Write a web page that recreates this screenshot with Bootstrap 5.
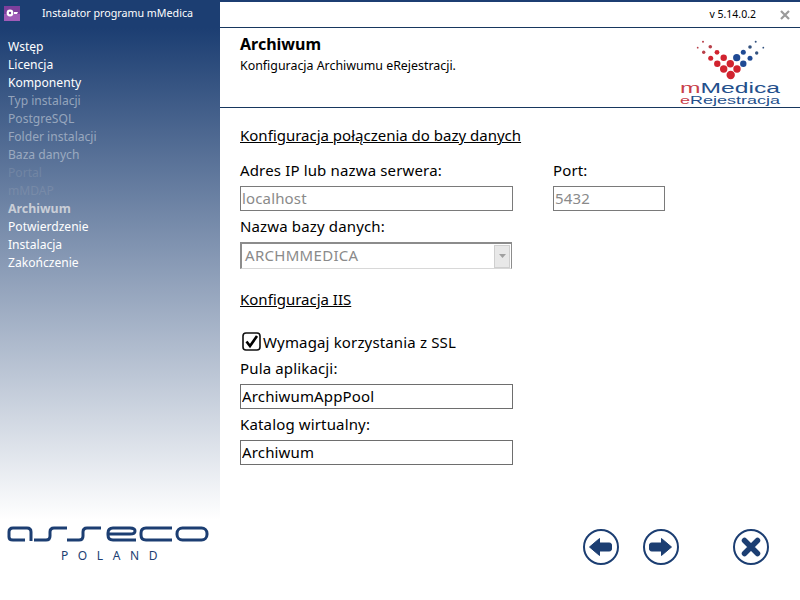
<!DOCTYPE html>
<html lang="pl">
<head>
<meta charset="utf-8">
<title>Instalator programu mMedica</title>
<link rel="stylesheet" href="https://cdn.jsdelivr.net/npm/bootstrap@5.3.0/dist/css/bootstrap.min.css">
<style>
html,body{height:100%;margin:0;background:#fff;}
body{font-family:"Noto Sans","Open Sans","Liberation Sans",sans-serif;color:#000;overflow:hidden;}
.shell{width:800px;height:600px;}
.side{width:220px;height:600px;flex:none;background:linear-gradient(180deg,#1c3e72 0,#1c3e72 28px,#ffffff 520px);color:#fff;}
.side-top{height:27px;padding-left:4px;font-size:10.7px;}
.side-title{margin-left:22px;line-height:27px;}
.steps{list-style:none;margin:11px 0 0;padding:0 0 0 8px;font-size:12.1px;line-height:18px;}
.steps .off{color:#b9c3d2;opacity:.7;}
.steps .ghost{color:#a8b0bd;opacity:.25;}
.steps .cur{color:#c9ced7;font-weight:700;font-size:12.4px;}
.brand{margin:auto 0 0;padding:0 0 37px 0;}
.brand-name{font-size:12px;letter-spacing:9.6px;color:#1c3e72;text-align:center;line-height:14px;margin-top:7px;padding-left:8px;}
.panel{width:580px;height:600px;flex:none;}
.topbar{height:28px;border-bottom:1px solid #17375e;border-top:2px solid #1c3e72;font-size:10.5px;padding-right:10px;gap:24px;}
.head{height:80px;border-bottom:1px solid #17375e;padding-left:20px;padding-right:15px;}
.head-title{font-size:16px;font-weight:700;line-height:18px;margin-top:7px;}
.head-sub{font-size:12.4px;line-height:16px;margin-top:5px;}
.form-zone{padding:16px 0 0 20px;font-size:15px;line-height:20px;letter-spacing:.15px;flex:1 1 auto;}
.sect{letter-spacing:0;text-decoration:underline;height:24px;line-height:22px;}
.lab{display:block;margin:0;height:20px;line-height:18px;}
.fld{display:block;width:273px;height:25px;border:1px solid #6e6e6e;padding:0 1px 2px;font:inherit;letter-spacing:inherit;line-height:20px;border-radius:0;outline:0;background:#fff;color:#000;margin-top:5px;}
.fld.dim{color:#8a8a8a;border-color:#7a7a7a;}
.fld.port{width:112px;}
.gap-port{width:40px;}
.top-13{margin-top:13px;}
.top-6{margin-top:6px;}
.top-19{margin-top:19px;}
.top-18{margin-top:18px;}
.top-5{margin-top:5px;}
.combo{width:272px;height:27px;border:1px solid #8c8c8c;border-bottom-color:#d8d8d8;border-top-width:2px;border-left-width:2px;color:#8a8a8a;padding:0 0 0 3px;line-height:24px;letter-spacing:.3px;margin-top:5px;}
.combo-text{margin-top:-2px;}
.combo-btn{width:16px;height:23px;background:#e8e8e8;border:1px solid #cfcfcf;margin-right:1px;}
.chk{height:24px;line-height:24px;}
.chk-box{margin-left:2px;margin-right:1px;}
.foot{padding:0 30px 34px 0;gap:22px;}
.rbtn{width:38px;height:38px;border:0;background:none;padding:0;}
.rbtn-far{margin-left:30px;}
</style>
</head>
<body>
<div class="shell d-flex">
  <aside class="side d-flex flex-column">
    <div class="side-top d-flex align-items-center">
      <svg width="16" height="15" viewBox="0 0 16 15"><rect width="16" height="15" fill="#7d3f9c"/><rect y="8" width="16" height="7" fill="#a05cb8"/><circle cx="6" cy="7" r="3.4" fill="#fff"/><circle cx="6" cy="7" r="1.2" fill="#7d3f9c"/><path d="M10 6h4l-1 2h-3z" fill="#fff"/></svg>
      <span class="side-title">Instalator programu mMedica</span>
    </div>
    <ul class="steps">
      <li>Wstęp</li><li>Licencja</li><li>Komponenty</li>
      <li class="off">Typ instalacji</li><li class="off">PostgreSQL</li><li class="off">Folder instalacji</li><li class="off">Baza danych</li>
      <li class="ghost">Portal</li><li class="ghost">mMDAP</li>
      <li class="cur">Archiwum</li>
      <li>Potwierdzenie</li><li>Instalacja</li><li>Zakończenie</li>
    </ul>
    <div class="brand">
      <svg class="d-block" width="220" height="17" viewBox="0 525 220 17" fill="none" stroke="#1c3e72" stroke-width="3">
        <path d="M31 541V532q0-4-4-4H13q-4 0-4 4v5q0 3 4 3H25"/>
        <path d="M34 540H46q4 0 4-4v-4q0-4 4-4H67"/>
        <path d="M67 540H79q4 0 4-4v-4q0-4 4-4H101"/>
        <path d="M136 540H113q-5 0-5-5v-2q0-5 5-5H130q5 0 5 3t-5 3H109"/>
        <path d="M172 528H146q-5 0-5 5v2q0 5 5 5H172"/>
        <rect x="177" y="528" width="30" height="12" rx="5.5"/>
      </svg>
      <div class="brand-name">POLAND</div>
    </div>
  </aside>
  <main class="panel d-flex flex-column">
    <div class="topbar d-flex align-items-center justify-content-end">
      <span>v 5.14.0.2</span>
      <svg width="10" height="10" viewBox="0 0 10 10" stroke="#9a9a9a" stroke-width="2.2"><path d="M1 1l8 8M9 1l-8 8"/></svg>
    </div>
    <header class="head d-flex justify-content-between">
      <div>
        <div class="head-title">Archiwum</div>
        <div class="head-sub">Konfiguracja Archiwumu eRejestracji.</div>
      </div>
      <svg width="110" height="79" viewBox="675 28 110 79">
        <g fill="#d1232f">
          <circle cx="730.7" cy="75" r="4.2"/><circle cx="723.7" cy="69" r="3.7"/><circle cx="737" cy="69" r="3.7"/><circle cx="717.3" cy="63.7" r="3.2"/><circle cx="730.3" cy="63.7" r="3.7"/><circle cx="723.7" cy="57.7" r="3.2"/><circle cx="710.7" cy="58.3" r="2.5"/><circle cx="717" cy="52.3" r="2.4"/>
        </g>
        <g fill="#b8404a">
          <circle cx="710.3" cy="46.7" r="1.8"/><circle cx="703.7" cy="52.3" r="1.7"/><circle cx="703" cy="41.7" r="1"/><circle cx="697.7" cy="47.7" r=".9"/>
        </g>
        <g fill="#1f4a94">
          <circle cx="736.7" cy="57.7" r="3.6"/><circle cx="743.3" cy="63.7" r="3.2"/><circle cx="750" cy="58.3" r="2.5"/><circle cx="743.3" cy="52.3" r="2.5"/>
        </g>
        <g fill="#33527f">
          <circle cx="750" cy="47" r="1.8"/><circle cx="756.7" cy="53" r="1.7"/><circle cx="755.7" cy="41.7" r="1"/><circle cx="763.3" cy="47.7" r=".9"/>
        </g>
        <text x="680" y="92.5" font-family="Liberation Sans" font-size="14" textLength="100" lengthAdjust="spacingAndGlyphs" fill="#24508c"><tspan fill="#c8404a">m</tspan>Medica</text>
        <text x="680" y="104" font-family="Liberation Sans" font-size="10.5" textLength="100" lengthAdjust="spacingAndGlyphs" fill="#24508c"><tspan fill="#c8404a">e</tspan>Rejestracja</text>
      </svg>
    </header>
    <form class="form-zone d-flex flex-column">
      <div class="sect">Konfiguracja połączenia do bazy danych</div>
      <div class="d-flex top-13">
        <div>
          <label class="lab">Adres IP lub nazwa serwera:</label>
          <input class="fld dim" value="localhost" readonly>
        </div>
        <div class="gap-port"></div>
        <div>
          <label class="lab">Port:</label>
          <input class="fld dim port" value="5432" readonly>
        </div>
      </div>
      <label class="lab top-6">Nazwa bazy danych:</label>
      <div class="combo d-flex justify-content-between align-items-center">
        <span class="combo-text">ARCHMMEDICA</span>
        <span class="combo-btn d-flex align-items-center justify-content-center"><svg width="7" height="4" viewBox="0 0 7 4"><path d="M0 0h7L3.5 4z" fill="#a0a0a0"/></svg></span>
      </div>
      <div class="sect top-19">Konfiguracja IIS</div>
      <div class="chk top-18 d-flex align-items-center">
        <svg width="20" height="20" viewBox="0 0 20 20" fill="none" class="chk-box"><rect x="1" y="1" width="17" height="17" rx="3" stroke="#111" stroke-width="1.6"/><path d="M4.5 9.5l3.5 4.5 7-10" stroke="#000" stroke-width="2.6"/></svg>
        <span>Wymagaj korzystania z SSL</span>
      </div>
      <label class="lab top-5">Pula aplikacji:</label>
      <input class="fld" value="ArchiwumAppPool">
      <label class="lab top-6">Katalog wirtualny:</label>
      <input class="fld" value="Archiwum">
    </form>
    <div class="foot d-flex justify-content-end align-items-center">
      <button type="button" class="rbtn" aria-label="Wstecz"><svg width="38" height="38" viewBox="0 0 38 38"><circle cx="19" cy="19" r="17" fill="#fff" stroke="#1c3e72" stroke-width="2"/><path d="M7.5 19l10-8.5v4.5h10q2 0 2 2v4q0 2-2 2h-10v4.500z" fill="#1c3e72" stroke="#1c3e72" stroke-linejoin="round"/></svg></button>
      <button type="button" class="rbtn" aria-label="Dalej"><svg width="38" height="38" viewBox="0 0 38 38"><circle cx="19" cy="19" r="17" fill="#fff" stroke="#1c3e72" stroke-width="2"/><path d="M29.500 19l-10-8.500v4.500h-10q-2 0-2 2v4q0 2 2 2h10v4.500z" fill="#1c3e72" stroke="#1c3e72" stroke-linejoin="round"/></svg></button>
      <button type="button" class="rbtn rbtn-far" aria-label="Zamknij"><svg width="38" height="38" viewBox="0 0 38 38"><circle cx="19" cy="19" r="17" fill="#fff" stroke="#1c3e72" stroke-width="2"/><path d="M12.500 12.500l13 13M25.500 12.500l-13 13" stroke="#1c3e72" stroke-width="5.500" stroke-linecap="round"/></svg></button>
    </div>
  </main>
</div>
<script src="https://cdn.jsdelivr.net/npm/bootstrap@5.3.0/dist/js/bootstrap.bundle.min.js"></script>
</body>
</html>
